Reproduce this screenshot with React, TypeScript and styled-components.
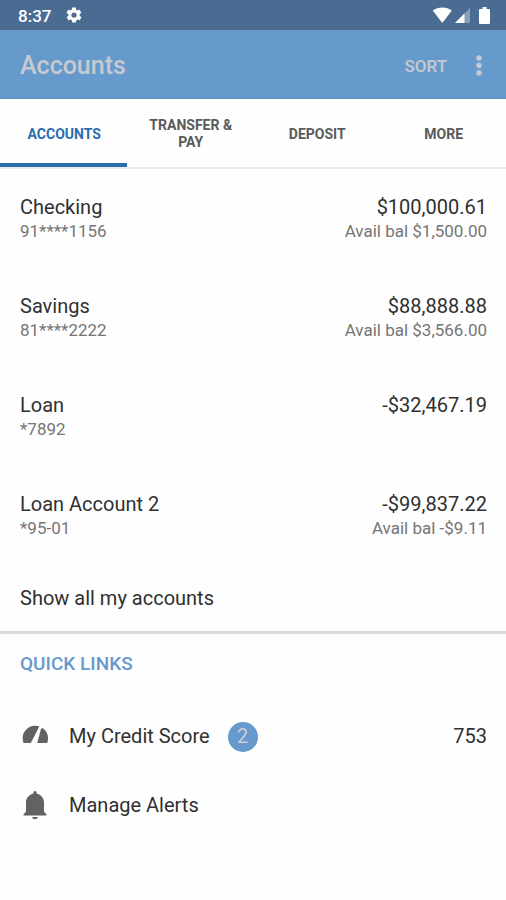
import React from "react";
import styled, { createGlobalStyle } from "styled-components";

const GlobalStyle = createGlobalStyle`
  *, *::before, *::after { box-sizing: border-box; }
  body {
    margin: 0;
    background: #fefefe;
    color: #303030;
    font-family: Roboto, "Liberation Sans", sans-serif;
  }
  button {
    margin: 0;
    padding: 0;
    border: 0;
    background: none;
    color: inherit;
    font: inherit;
    cursor: pointer;
  }
`;

const Screen = styled.div`
  display: flex;
  flex-direction: column;
  min-height: 100vh;
`;

const StatusBar = styled.div`
  display: flex;
  align-items: center;
  justify-content: space-between;
  height: 30px;
  padding: 0 16px 0 18px;
  background: #4a6c92;
  color: #ffffff;
`;

const StatusGroup = styled.div<{ $gap: number }>`
  display: flex;
  align-items: center;
  gap: ${({ $gap }) => $gap}px;
`;

const BatterySlot = styled.span`
  display: flex;
  padding-left: 5px;
`;

const Clock = styled.span`
  padding-top: 2px;
  font-size: 17px;
  font-weight: 500;
  line-height: 20px;
`;

const AppBar = styled.header`
  display: flex;
  align-items: center;
  height: 69px;
  padding: 3px 24px 0 20px;
  border-bottom: 1px solid #5b8fc6;
  background: #6699cc;
  color: #c6cad0;
`;

const Title = styled.h1`
  flex: 1;
  margin: 0;
  font-size: 25px;
  font-weight: 500;
  line-height: 32px;
`;

const SortButton = styled.button`
  font-size: 17px;
  font-weight: 500;
  line-height: 24px;
`;

const MenuButton = styled.button`
  display: flex;
  margin-left: 29px;
`;

const Tabs = styled.nav`
  display: grid;
  grid-template-columns: repeat(4, 1fr);
  height: 70px;
  border-bottom: 2px solid #ebebeb;
`;

const Tab = styled.button<{ $active?: boolean }>`
  padding: 6px 18px 0 20px;
  border-bottom: 4px solid ${({ $active }) => ($active ? "#2a6db0" : "transparent")};
  color: ${({ $active }) => ($active ? "#2a6db0" : "#5a5a5a")};
  font-size: 14px;
  font-weight: 700;
  line-height: 17px;
  text-transform: uppercase;
`;

const AccountList = styled.ul`
  margin: 0;
  padding: 0;
  list-style: none;
`;

const AccountRow = styled.li`
  display: flex;
  justify-content: space-between;
  height: 99px;
  padding: 26px 19px 0 20px;
`;

const Column = styled.div<{ $end?: boolean }>`
  display: flex;
  flex-direction: column;
  align-items: ${({ $end }) => ($end ? "flex-end" : "flex-start")};
`;

const Primary = styled.span`
  font-size: 20px;
  line-height: 25px;
`;

const Secondary = styled.span`
  color: #757575;
  font-size: 17px;
  line-height: 23px;
`;

const ShowAll = styled.button`
  align-self: stretch;
  height: 66px;
  padding: 0 20px;
  text-align: left;
  font-size: 20px;
  line-height: 25px;
`;

const QuickLinks = styled.section`
  border-top: 3px solid #dcdcdc;
`;

const SectionTitle = styled.h2`
  margin: 0;
  padding: 18px 20px 26px;
  color: #6699cc;
  font-size: 19px;
  font-weight: 500;
  line-height: 24px;
`;

const LinkRow = styled.a`
  display: flex;
  align-items: center;
  height: 69px;
  padding: 0 19px 0 20px;
  color: inherit;
  font-size: 20px;
  line-height: 25px;
  text-decoration: none;
`;

const LinkIcon = styled.span`
  display: flex;
  width: 49px;
`;

const Badge = styled.span`
  display: flex;
  align-items: center;
  justify-content: center;
  width: 30px;
  height: 30px;
  margin-left: 18px;
  border-radius: 50%;
  background: #6699cc;
  color: #c9cdd4;
`;

const Score = styled.span`
  margin-left: auto;
`;

const GearIcon = () => (
  <svg width="18" height="18" viewBox="0 0 24 24" fill="currentColor" aria-hidden="true">
    <path d="M19.4 13c.1-.3.1-.6.1-1s0-.7-.1-1l2.1-1.6c.2-.2.3-.4.1-.7l-2-3.4c-.1-.2-.4-.3-.6-.2l-2.5 1c-.5-.4-1.1-.7-1.7-1l-.4-2.6c0-.3-.2-.5-.5-.5h-4c-.2 0-.4.2-.5.4l-.4 2.7c-.6.2-1.2.6-1.7 1l-2.5-1c-.2-.1-.5 0-.6.2l-2 3.4c-.1.2-.1.5.1.7L4.6 11c0 .3-.1.7-.1 1s0 .7.1 1l-2.1 1.6c-.2.2-.3.4-.1.7l2 3.4c.1.2.4.3.6.2l2.5-1c.5.4 1.1.7 1.7 1l.4 2.6c0 .3.2.5.5.5h4c.2 0 .4-.2.5-.4l.4-2.7c.6-.2 1.2-.6 1.7-1l2.5 1c.2.1.5 0 .6-.2l2-3.4c.1-.2.1-.5-.1-.7L19.4 13zM12 15.500a3.500 3.500 0 1 1 0-7 3.500 3.500 0 0 1 0 7z" />
  </svg>
);

const WifiIcon = () => (
  <svg width="20" height="16" viewBox="0 0 20 16" fill="currentColor" aria-hidden="true">
    <path d="M.8 3.500C6-.6 14.600-.6 19.800 3.500L10.900 15.200q-.6.700-1.200 0z" />
  </svg>
);

const SignalIcon = () => (
  <svg width="16" height="16" viewBox="0 0 16 16" fill="currentColor" aria-hidden="true">
    <path d="M15 1v15H0z" opacity="0.35" />
    <path d="M9.500 6.500V16H0z" />
  </svg>
);

const BatteryIcon = () => (
  <svg width="11" height="17" viewBox="0 0 11 17" fill="currentColor" aria-hidden="true">
    <path d="M3.500 0h4v2H10q1 0 1 1v13q0 1-1 1H1q-1 0-1-1V3q0-1 1-1h2.500z" />
  </svg>
);

const MoreIcon = () => (
  <svg width="6" height="22" viewBox="0 0 6 22" fill="currentColor" aria-hidden="true">
    <circle cx="3" cy="3" r="2.700" />
    <circle cx="3" cy="10.500" r="2.700" />
    <circle cx="3" cy="18" r="2.700" />
  </svg>
);

const GaugeIcon = () => (
  <svg width="30" height="30" viewBox="0 0 30 30" fill="#626262" aria-hidden="true">
    <path d="M3.500 21C2.900 19.500 2.600 17.800 2.600 16A12.700 12.700 0 0 1 19.200 4.300L18.300 6.600L10.800 21z" />
    <path d="M22.300 5.800A12.700 12.700 0 0 1 27.200 21H17.300L20.800 7.600z" />
  </svg>
);

const BellIcon = () => (
  <svg width="30" height="32" viewBox="0 0 30 32" fill="#626262" aria-hidden="true">
    <path d="M13.400 3.600V2.600q0-1.600 1.600-1.600t1.600 1.600v1C21 5 24 8 24 12.500V21.500L26.500 24.500V25.500H3.500V24.500L6 21.500V12.500C6 8 9 5 13.400 3.600z" />
    <path d="M12 27h6Q17.400 29.200 15 29.200t-3-2.200z" />
  </svg>
);

interface Account {
  name: string;
  number: string;
  balance: string;
  available?: string;
}

const accounts: Account[] = [
  { name: "Checking", number: "91****1156", balance: "$100,000.61", available: "Avail bal $1,500.00" },
  { name: "Savings", number: "81****2222", balance: "$88,888.88", available: "Avail bal $3,566.00" },
  { name: "Loan", number: "*7892", balance: "-$32,467.19" },
  { name: "Loan Account 2", number: "*95-01", balance: "-$99,837.22", available: "Avail bal -$9.11" },
];

const tabs = ["Accounts", "Transfer & Pay", "Deposit", "More"];

export default function App() {
  return (
    <Screen>
      <GlobalStyle />
      <StatusBar>
        <StatusGroup $gap={14}>
          <Clock>8:37</Clock>
          <GearIcon />
        </StatusGroup>
        <StatusGroup $gap={3}>
          <WifiIcon />
          <SignalIcon />
          <BatterySlot>
            <BatteryIcon />
          </BatterySlot>
        </StatusGroup>
      </StatusBar>
      <AppBar>
        <Title>Accounts</Title>
        <SortButton type="button">SORT</SortButton>
        <MenuButton type="button" aria-label="More options">
          <MoreIcon />
        </MenuButton>
      </AppBar>
      <Tabs>
        {tabs.map((label, index) => (
          <Tab key={label} type="button" $active={index === 0} aria-current={index === 0 ? "page" : undefined}>
            {label}
          </Tab>
        ))}
      </Tabs>
      <AccountList>
        {accounts.map((account) => (
          <AccountRow key={account.name}>
            <Column>
              <Primary>{account.name}</Primary>
              <Secondary>{account.number}</Secondary>
            </Column>
            <Column $end>
              <Primary>{account.balance}</Primary>
              {account.available && <Secondary>{account.available}</Secondary>}
            </Column>
          </AccountRow>
        ))}
      </AccountList>
      <ShowAll type="button">Show all my accounts</ShowAll>
      <QuickLinks>
        <SectionTitle>QUICK LINKS</SectionTitle>
        <LinkRow href="#credit-score">
          <LinkIcon>
            <GaugeIcon />
          </LinkIcon>
          My Credit Score
          <Badge>2</Badge>
          <Score>753</Score>
        </LinkRow>
        <LinkRow href="#alerts">
          <LinkIcon>
            <BellIcon />
          </LinkIcon>
          Manage Alerts
        </LinkRow>
      </QuickLinks>
    </Screen>
  );
}
